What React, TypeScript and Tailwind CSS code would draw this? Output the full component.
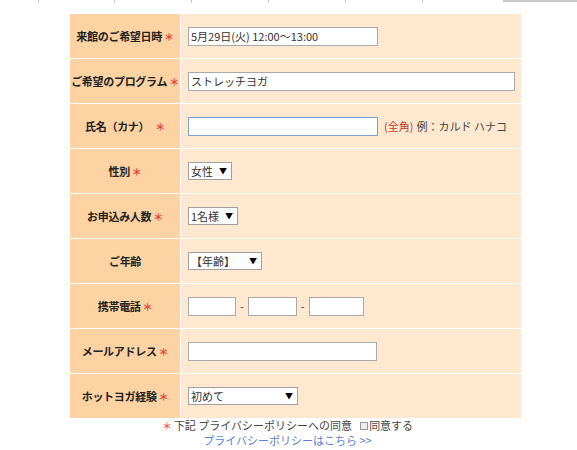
const F = { fontFamily: '"Noto Sans CJK JP", sans-serif' };

function Star() {
  return <span className="text-[#e8413b] ml-[2px] text-[10px]">＊</span>;
}

function Sel({ w, text }: { w: number; text: string }) {
  return (
    <div className="h-[18px] border border-[#a0a0a0] bg-white flex items-center justify-between pl-[2px] pr-[4px] text-[11px] text-[#333] whitespace-nowrap" style={{ minWidth: w }}>
      <span className="mr-[6px]">{text}</span>
      <span className="text-[8px] text-black">▼</span>
    </div>
  );
}

function Inp({ w, focus }: { w: number; focus?: boolean }) {
  return <div className={`h-[19px] bg-white border ${focus ? "border-[#7b9fd3]" : "border-[#a9a9a9]"}`} style={{ width: w }} />;
}

const rows: [string, React.ReactNode][] = [
  ["来館のご希望日時", <div className="w-[190px] h-[19px] bg-white border border-[#a9a9a9] text-[11px] text-[#333] flex items-center px-[2px]">5月29日(火) 12:00〜13:00</div>],
  ["ご希望のプログラム", <div className="w-[327px] h-[19px] bg-white border border-[#a9a9a9] text-[11px] text-[#333] flex items-center px-[2px]">ストレッチヨガ</div>],
  ["氏名（カナ）", <div className="flex items-center gap-[6px] text-[11px] whitespace-nowrap"><Inp w={190} focus /><span className="text-[#c0392b]">(全角)</span><span className="text-[#444] -ml-[3px]">例：カルド ハナコ</span></div>],
  ["性別", <Sel w={40} text="女性" />],
  ["お申込み人数", <Sel w={46} text="1名様" />],
  ["ご年齢", <Sel w={74} text="【年齢】" />],
  ["携帯電話", <div className="flex items-center gap-[4px] text-[11px] text-[#444]"><Inp w={48} /><span>-</span><Inp w={49} /><span>-</span><Inp w={55} /></div>],
  ["メールアドレス", <Inp w={189} />],
  ["ホットヨガ経験", <Sel w={110} text="初めて" />],
];

export default function App() {
  return (
    <div className="w-[577px] h-[450px] bg-white relative overflow-hidden" style={F}>
      <div className="h-[3px] flex">
        <div className="flex-1">
          {[38, 114, 191, 268, 345, 422].map((x, i) => (
            <div key={i} className="absolute top-0 w-px h-[3px] bg-[#ccc]" style={{ left: x }} />
          ))}
        </div>
        <div className="w-[74px] h-[2px] bg-[#c8c8c8]" />
      </div>
      <div className="ml-[70px] mt-[11px] w-[451px] flex flex-col gap-px">
        {rows.map(([l, c], i) => (
          <div key={i} className="flex h-[44px] gap-px">
            <div className="w-[110px] bg-[#fdd3a3] flex items-center justify-center text-[11px] font-bold text-[#222] tracking-[-0.3px] whitespace-nowrap">
              {l}{i === 2 ? <span className="ml-[4px]"><Star /></span> : i === 5 ? null : <Star />}
            </div>
            <div className="flex-1 bg-[#fee8cf] flex items-center pl-[7px]">{c}</div>
          </div>
        ))}
      </div>
      <div className="flex flex-col items-center ml-[-2px] text-[11px] leading-[15px]">
        <div className="text-[#444] flex items-center">
          <span className="text-[#e8413b] mr-[2px] text-[10px]">＊</span>下記 プライバシーポリシーへの同意
          <span className="ml-[8px] inline-block w-[8px] h-[8px] border border-[#999] bg-[#eee] mr-[1px]" />同意する
        </div>
        <div className="text-[#5a7fd8]">プライバシーポリシーはこちら &gt;&gt;</div>
      </div>
    </div>
  );
}
